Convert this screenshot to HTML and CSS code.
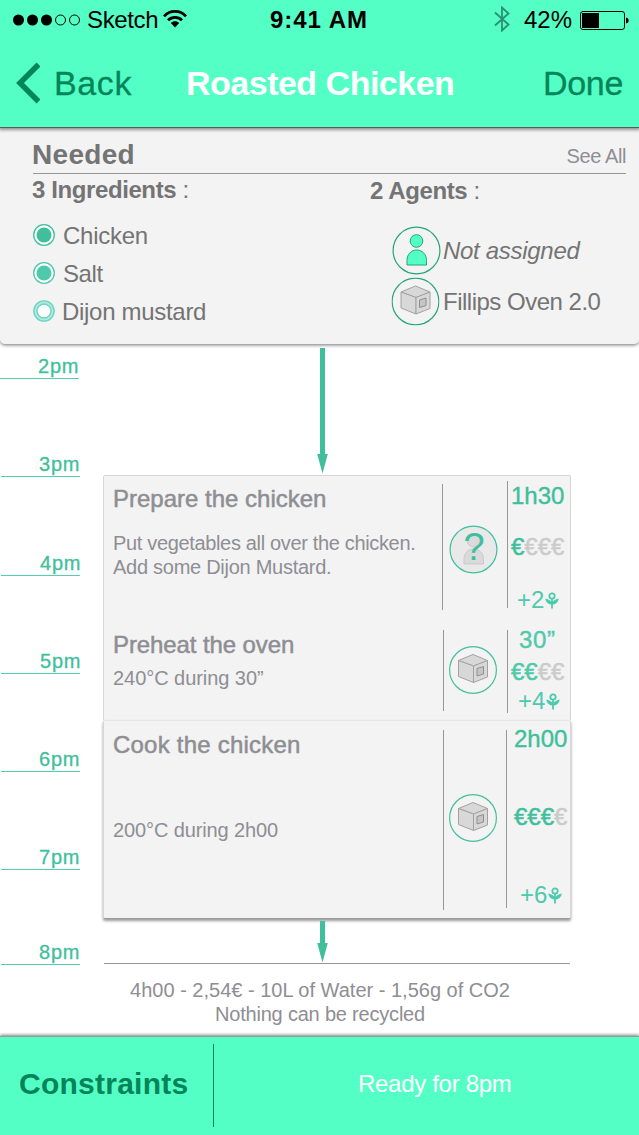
FILE: index.html
```html
<!DOCTYPE html>
<html lang="en">
<head>
<meta charset="utf-8">
<title>Roasted Chicken</title>
<link rel="stylesheet" href="styles.css">
</head>
<body>
<svg class="defs" width="0" height="0">
  <symbol id="oven" viewBox="0 0 48 48">
    <circle class="ring" cx="24" cy="24" r="23.4"/>
    <g class="oven-body">
      <path d="M9.500 14.500 24 8.500 38.500 14.500 24.500 20Z"/>
      <path d="M9.500 14.500 24.500 20V36.500L9.500 30.500Z"/>
      <path d="M24.500 20 38.500 14.500V31L24.500 36.500Z"/>
      <path class="oven-door" d="M28 22.500 34.500 20.500V28L28 30Z"/>
    </g>
  </symbol>
  <symbol id="leaf" viewBox="0 0 14 17">
    <circle cx="7" cy="4" r="2.700" fill="none" stroke="currentColor" stroke-width="1.800"/>
    <path d="M6.100 6.500H7.900V9.600C9 8.200 11 7 13.800 6.600C13.200 10.300 10.900 12.200 7.900 12.600V16.500H6.100V12.600C3.100 12.200.8 10.300.2 6.600C3 7 5 8.200 6.100 9.600Z" fill="currentColor"/>
  </symbol>
</svg>

<header class="header">
  <div class="status">
    <div class="status-left">
      <svg width="70" height="14" viewBox="0 0 70 14">
        <circle cx="7.500" cy="7" r="5.500"/><circle cx="21.500" cy="7" r="5.500"/><circle cx="35.500" cy="7" r="5.500"/>
        <g fill="none" stroke="#000"><circle cx="49.500" cy="7" r="5"/><circle cx="63.500" cy="7" r="5"/></g>
      </svg>
      <span class="carrier">Sketch</span>
      <svg class="wifi" width="24" height="18" viewBox="0 0 24 18">
        <g fill="none" stroke="#000" stroke-width="2.800"><path d="M1 6.400C7-.2 17-.2 23 6.400"/><path d="M5 10.300C9 6.400 15 6.400 19 10.300"/></g>
        <path d="M7.800 12.900C10.300 10.700 13.700 10.700 16.200 12.900L12 17.500Z"/>
      </svg>
    </div>
    <span class="clock">9:41 AM</span>
    <div class="status-right">
      <svg class="bluetooth" width="16" height="26" viewBox="0 0 16 26"><path d="M1 6.500 14.500 18.500 8 24.500V1.500L14.500 7.500 1 19.500" fill="none" stroke="#2c8f70" stroke-width="1.800"/></svg>
      <span class="percent">42%</span>
      <svg class="battery" width="50" height="20" viewBox="0 0 50 20"><rect x=".5" y=".5" width="44" height="18" rx="2.500" fill="none" stroke="#000"/><rect x="2" y="2" width="17" height="15"/><path d="M46 6.500C49.600 7 49.600 12 46 12.500Z"/></svg>
    </div>
  </div>
  <nav class="nav">
    <div class="back"><svg width="26" height="42" viewBox="0 0 26 42"><path d="M24.500 2.500 6 21 24.500 39.500" fill="none" stroke="#038459" stroke-width="5.500"/></svg><span>Back</span></div>
    <h1 class="title">Roasted Chicken</h1>
    <span class="done">Done</span>
  </nav>
</header>

<section class="needed">
  <div class="needed-head"><h2>Needed</h2><span class="see-all">See All</span></div>
  <div class="needed-cols">
    <div class="ingredients">
      <h3><b>3 Ingredients</b> :</h3>
      <ul>
        <li><svg width="22" height="22"><circle cx="11" cy="11" r="10.300" fill="#fff" stroke="#3fbf9b" stroke-width="1.300"/><circle cx="11" cy="11" r="7.500" fill="#3fbf9b"/></svg><span class="chicken">Chicken</span></li>
        <li><svg width="22" height="22"><circle cx="11" cy="11" r="10.300" fill="#fff" stroke="#4fc9ac" stroke-width="1.300"/><circle cx="11" cy="11" r="7.500" fill="#4fc9ac"/></svg><span class="salt">Salt</span></li>
        <li><svg width="22" height="22"><circle cx="11" cy="11" r="8.600" fill="#fff" stroke="#b5eadf" stroke-width="4"/><circle cx="11" cy="11" r="10.100" fill="none" stroke="#6bd6c3" stroke-width="1.400"/><circle cx="11" cy="11" r="7" fill="none" stroke="#6bd6c3" stroke-width="1.400"/></svg><span class="mustard">Dijon mustard</span></li>
      </ul>
    </div>
    <div class="agents">
      <h3><b>2 Agents</b> :</h3>
      <div class="agent person-row">
        <svg width="49" height="49" viewBox="-.5 -.5 49 49"><circle class="ring" cx="24" cy="24" r="23.400"/><g fill="#53ffc5" stroke="#25a47b"><circle cx="24" cy="14.500" r="6.300"/><path d="M14.500 38.500V34C14.500 27.500 19 23.500 24.200 23.500S34 27.500 34 34V38.500Z"/></g></svg>
        <i>Not assigned</i>
      </div>
      <div class="agent oven-row"><svg width="49" height="49"><use href="#oven" x=".5" y=".5" width="48" height="48"/></svg><span>Fillips Oven 2.0</span></div>
    </div>
  </div>
</section>

<main class="timeline">
  <div class="hours">
    <div class="hour h2">2pm</div><div class="hour h3">3pm</div><div class="hour h4">4pm</div><div class="hour h5">5pm</div><div class="hour h6">6pm</div><div class="hour h7">7pm</div><div class="hour h8">8pm</div>
  </div>
  <div class="plan">
    <svg class="arrow" width="12" height="126" viewBox="0 0 12 126"><path d="M4 0H9V106H11.800L6.500 125.500 1.200 106H4Z"/></svg>
    <article class="card prepare">
      <div class="info"><h4>Prepare the chicken</h4><p class="long">Put vegetables all over the chicken.</p><p class="add">Add some Dijon Mustard.</p></div>
      <div class="rule"></div>
      <div class="who"><svg width="49" height="49" viewBox="-.5 -.5 49 49"><circle class="ring" cx="24" cy="24" r="23.400" fill="#e9e9e9"/><g fill="#dadada" stroke="#c9c9c9"><circle cx="24" cy="15" r="6.300"/><path d="M14.500 38.500V34C14.500 27.500 19 23.500 24.200 23.500S34 27.500 34 34V38.500Z"/></g><text class="question" x="24.500" y="34">?</text></svg></div>
      <div class="rule"></div>
      <div class="stats"><span class="time">1h30</span><span class="cost">€<s>€€€</s></span><span class="eco">+2<svg width="14" height="17"><use href="#leaf"/></svg></span></div>
    </article>
    <article class="card preheat">
      <div class="info"><h4>Preheat the oven</h4><p>240°C during 30”</p></div>
      <div class="rule"></div>
      <div class="who"><svg width="48" height="48"><use href="#oven"/></svg></div>
      <div class="rule"></div>
      <div class="stats"><span class="time">30”</span><span class="cost">€€<s>€€</s></span><span class="eco">+4<svg width="14" height="17"><use href="#leaf"/></svg></span></div>
    </article>
    <article class="card cook">
      <div class="info"><h4>Cook the chicken</h4><p>200°C during 2h00</p></div>
      <div class="rule"></div>
      <div class="who"><svg width="48" height="48"><use href="#oven"/></svg></div>
      <div class="rule"></div>
      <div class="stats"><span class="time">2h00</span><span class="cost">€€€<s>€</s></span><span class="eco">+6<svg width="14" height="17"><use href="#leaf"/></svg></span></div>
    </article>
    <svg class="arrow last" width="12" height="42" viewBox="0 0 12 42"><path d="M4 0H9V22H11.800L6.500 41.500 1.200 22H4Z"/></svg>
    <div class="summary"><p>4h00 - 2,54€ - 10L of Water - 1,56g of CO2</p><p class="recycle">Nothing can be recycled</p></div>
  </div>
</main>

<footer class="footer"><b class="constraints">Constraints</b><span class="ready">Ready for 8pm</span></footer>
</body>
</html>
```

FILE: styles.css
```css
* { box-sizing: border-box; margin: 0; padding: 0; }
body {
  --ring: #26a47b;
  width: 639px;
  height: 1135px;
  overflow: hidden;
  display: flex;
  flex-direction: column;
  background: #fff;
  font: 24px/28px "Liberation Sans", Arial, sans-serif;
  color: #747474;
  white-space: nowrap;
}
svg { display: block; flex: none; }
.defs { position: absolute; }
ul { list-style: none; }

.header {
  position: relative;
  z-index: 2;
  height: 127px;
  flex: none;
  background: #53ffc5;
  box-shadow: 0 1px 0 #5b5b5b, 0 2px 3px 1px rgba(0, 0, 0, .4);
  color: #000;
}
.status {
  height: 40px;
  display: grid;
  grid-template-columns: 262px 114px 263px;
  align-items: center;
}
.status-left { display: flex; align-items: center; padding-left: 11px; }
.carrier { margin-left: 6px; letter-spacing: -.35px; }
.wifi { margin: -2px 0 0 5px; }
.clock { font-weight: 700; text-align: center; letter-spacing: 1px; }
.status-right { display: flex; align-items: center; padding-left: 118px; }
.bluetooth { margin-top: -2px; }
.percent { margin-left: 14px; }
.battery { margin-left: 8px; margin-top: 1px; }
.nav {
  height: 86px;
  display: grid;
  grid-template-columns: 186px 300px 1fr;
  align-items: center;
  font-size: 34px;
  line-height: 40px;
  color: #038459;
}
.back { display: flex; align-items: center; padding-left: 14px; gap: 14px; }
.back span { letter-spacing: .6px; -webkit-text-stroke: .3px #038459; }
.title { font-size: 34px; color: #fff; letter-spacing: -.5px; }
.done { padding-left: 57px; letter-spacing: -.3px; -webkit-text-stroke: .3px #038459; }

.needed {
  position: relative;
  z-index: 1;
  height: 218px;
  flex: none;
  padding: 12px 13px 0 33px;
  background: #f3f3f3;
  border-bottom: 1px solid #aaa;
  border-radius: 0 0 5px 5px;
  box-shadow: 0 1px 3px rgba(0, 0, 0, .35);
}
.needed-head {
  height: 35px;
  display: flex;
  justify-content: space-between;
  border-bottom: 1px solid #979797;
}
.needed-head h2 { font-size: 28px; line-height: 32px; margin-left: -1px; letter-spacing: .3px; }
.see-all { font-size: 20px; line-height: 24px; padding-top: 5px; color: #8e8e93; letter-spacing: -.4px; }
.needed-cols { display: grid; grid-template-columns: 337px 1fr; }
.needed h3 { font-weight: 400; font-size: 24px; letter-spacing: -.4px; }
.needed h3 b { letter-spacing: -.4px; }
.ingredients { padding-top: 2px; }
.ingredients h3 { margin-left: -1px; }
.ingredients ul { padding-top: 13px; }
.ingredients li { display: flex; align-items: center; height: 38px; gap: 8px; }
.ingredients li svg { margin-top: -3px; }
.chicken { letter-spacing: -.25px; }
.salt { letter-spacing: -.4px; }
.mustard { margin-left: -1px; letter-spacing: -.3px; }
.agents { padding-top: 3px; }
.agent { display: flex; align-items: center; height: 51px; }
.person-row { margin: 20px 0 0 22px; gap: 2px; letter-spacing: -.3px; }
.oven-row { margin-left: 21px; gap: 3px; letter-spacing: -.5px; }

.ring { stroke: var(--ring); stroke-width: 1.2; }
.ring:not([fill]) { fill: none; }
.oven-body { fill: #d8d8d8; stroke: #a2a2a2; stroke-width: 1; stroke-linejoin: round; }
.oven-door { fill: #c5c5c5; stroke: #8f8f8f; }

.timeline { display: grid; grid-template-columns: 103px 468px; height: 691px; flex: none; }
.hour {
  width: 79px;
  height: 98px;
  margin-left: 1px;
  display: flex;
  align-items: flex-end;
  padding-left: 38px;
  border-bottom: 1px solid #54cdb1;
  font-size: 20px;
  line-height: 24px;
  letter-spacing: .8px;
  color: #3fbf9b;
  -webkit-text-stroke: .3px #3fbf9b;
}
.h2 { height: 34px; margin-left: 0; }
.h4 { height: 99px; }
.h4, .h5 { padding-left: 39px; }
.h8 { height: 95px; }

.plan { display: flex; flex-direction: column; color: #8e8e93; }
.arrow { margin: 3px 0 1px 213px; fill: #3fbf9b; }
.arrow.last { margin: 2px 0 0 213px; }
.card {
  --ring: #3fbf9b;
  display: grid;
  grid-template-columns: 339px 1px 63px 1px 1fr;
  background: #f3f3f3;
  border: 1px solid #d6d6d6;
  flex: none;
}
.prepare { height: 150px; border-bottom: 0; border-radius: 2px 2px 0 0; grid-template-columns: 338px 1px 64px 1px 1fr; }
.preheat { height: 95px; border-top: 0; border-bottom: 0; }
.cook {
  height: 199px;
  grid-template-columns: 339px 1px 62px 1px 1fr;
  border-top-color: #e6e6e6;
  border-bottom-color: #9b9b9b;
  border-radius: 2px;
  box-shadow: 0 2px 3px rgba(0, 0, 0, .4);
}
.info { padding-left: 9px; }
.card h4 { font-size: 24px; font-weight: 400; -webkit-text-stroke: .5px #8e8e93; }
.card p { font-size: 20px; line-height: 24px; }
.prepare .info { padding-top: 9px; }
.prepare h4 { margin-bottom: 18px; }
.card .long { letter-spacing: -.34px; }
.card .add { letter-spacing: -.27px; }
.preheat .info { padding-top: 6px; }
.preheat h4 { margin-bottom: 7px; letter-spacing: -.1px; }
.preheat p { letter-spacing: -.05px; }
.cook .info { padding-top: 10px; }
.cook h4 { margin-bottom: 59px; letter-spacing: .22px; }
.cook p { letter-spacing: -.12px; }
.rule { background: #979797; }
.prepare .rule { margin: 8px 0 15px; }
.prepare .rule ~ .rule { margin: 5px 0 17px; }
.preheat .rule { margin: 5px 0 9px; }
.preheat .rule ~ .rule { margin: 5px 0 7px; }
.cook .rule { margin: 9px 0 8px; }
.cook .rule ~ .rule { margin: 9px 0 10px; }
.who { padding-left: 5px; }
.prepare .who { padding: 49px 0 0 6px; }
.preheat .who { padding-top: 21px; }
.cook .who { padding-top: 73px; }
.question { font-size: 38px; text-anchor: middle; fill: #3fbf9b; }
.stats { display: flex; flex-direction: column; color: #3fbf9b; }
.time { -webkit-text-stroke: .4px currentColor; }
.cost { -webkit-text-stroke: .5px currentColor; }
.cost s { color: #cbcbcb; text-decoration: none; }
.eco { display: flex; align-items: center; color: #4fc9ac; letter-spacing: -.1px; }
.eco svg { margin-top: 1px; margin-left: 1px; }
.prepare .stats { padding: 6px 0 0 3px; }
.prepare .cost { margin-top: 22.500px; }
.prepare .eco { margin: 25.500px 0 0 6px; }
.preheat .stats { padding: 1px 0 0 3px; color: #4fc9ac; }
.preheat .time { padding-left: 8px; letter-spacing: .7px; }
.preheat .cost { margin-top: 4px; }
.preheat .eco { margin: 1px 0 0 7px; }
.cook .stats { padding: 4px 0 0 7px; }
.cook .cost { margin-top: 50px; }
.cook .eco { margin: 50px 0 0 6px; }
.summary {
  border-top: 1px solid #979797;
  margin: 0 1px;
  padding: 14px 34px 0 0;
  text-align: center;
  font-size: 20px;
  line-height: 24px;
}
.recycle { letter-spacing: -.2px; }

.footer {
  position: relative;
  height: 99px;
  flex: none;
  display: flex;
  align-items: center;
  background: #53ffc5;
  border-top: 1px solid #969c99;
  box-shadow: 0 -1px 3px rgba(0, 0, 0, .5);
}
.constraints {
  width: 214px;
  height: 83px;
  margin-top: -1px;
  padding: 7px 0 0 19px;
  border-right: 1px solid #038459;
  font-size: 30px;
  line-height: 66px;
  letter-spacing: .25px;
  color: #038459;
}
.ready { padding: 0 0 5px 144px; color: #fff; letter-spacing: -.3px; }
```
